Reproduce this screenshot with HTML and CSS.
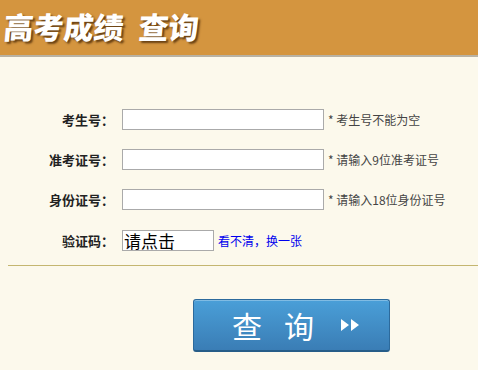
FILE: index.html
```html
<!DOCTYPE html>
<html lang="zh">
<head>
<meta charset="utf-8">
<link rel="stylesheet" href="styles.css">
</head>
<body>
<div class="header"><h1><span>高考成绩</span><span>查询</span></h1></div>
<div class="form">
  <div class="row">
    <label class="lbl">考生号：</label>
    <input class="inp" type="text">
    <span class="hint">* 考生号不能为空</span>
  </div>
  <div class="row">
    <label class="lbl">准考证号：</label>
    <input class="inp" type="text">
    <span class="hint">* 请输入9位准考证号</span>
  </div>
  <div class="row">
    <label class="lbl">身份证号：</label>
    <input class="inp" type="text">
    <span class="hint">* 请输入18位身份证号</span>
  </div>
  <div class="row row-captcha">
    <label class="lbl">验证码：</label>
    <div class="captcha">请点击</div>
    <span class="link">看不清，换一张</span>
  </div>
</div>
<div class="divider"></div>
<div class="actions">
  <button class="btn"><span class="btn-text"><span>查</span><span>询</span></span><svg class="arrows" width="20" height="12" viewBox="0 0 20 12"><path d="M1 0 L9 6 L1 12 Z M11 0 L19 6 L11 12 Z" fill="#fff"/></svg></button>
</div>
</body>
</html>
```
FILE: styles.css
```css
html, body { margin: 0; padding: 0; }
body {
  background: #fcf9ec;
  font-family: "Noto Sans CJK SC", "Noto Sans", sans-serif;
  width: 478px;
  height: 370px;
  overflow: hidden;
}
.header {
  height: 55px;
  background: #d4953f;
  border-bottom: 2px solid #b8b2a4;
  display: flex;
  align-items: center;
}
.header h1 {
  margin: 0 0 0 4px;
  font-size: 30px;
  font-weight: 900;
  color: #fff;
  text-shadow: 2px 2px 2px rgba(60, 30, 0, 0.7);
  line-height: 1;
  display: flex;
  gap: 15px;
  transform: skewX(-5deg);
  position: relative;
  top: -2px;
}
.form {
  padding-top: 52px;
  display: flex;
  flex-direction: column;
  gap: 20px;
}
.row {
  display: flex;
  align-items: center;
  height: 20px;
}
.row-captcha {
  margin-top: 1px;
}
.lbl {
  width: 114px;
  text-align: right;
  font-size: 13px;
  font-weight: bold;
  color: #222;
  margin-right: 8px;
}
.inp {
  box-sizing: border-box;
  width: 202px;
  height: 21px;
  border: 1px solid #aaa;
  background: #fff;
  margin: 0;
  padding: 0;
}
.hint {
  margin-left: 4px;
  font-size: 12px;
  color: #444;
}
.captcha {
  box-sizing: border-box;
  width: 92px;
  height: 21px;
  border: 1px solid #aaa;
  background: #fff;
  font-size: 17px;
  line-height: 19px;
  color: #000;
  padding-left: 1px;
}
.link {
  margin-left: 4px;
  font-size: 12px;
  color: #0000ee;
}
.divider {
  margin: 15px 0 0 8px;
  height: 1px;
  background: #c4b670;
}
.actions {
  display: flex;
  padding-left: 193px;
  padding-top: 33px;
}
.btn {
  box-sizing: border-box;
  width: 197px;
  height: 53px;
  border: 1px solid #2c6a9c;
  border-bottom: 2px solid #265d88;
  border-radius: 3px;
  background: linear-gradient(#4a9fd8, #3a7db5);
  color: #fff;
  display: flex;
  align-items: center;
  padding: 0 0 0 38px;
  font-family: "Noto Sans CJK SC", sans-serif;
  box-shadow: inset 0 1px 0 rgba(255,255,255,0.3);
}
.btn-text {
  font-size: 30px;
  display: flex;
  gap: 22px;
}
.arrows {
  margin-left: 26px;
}
```
